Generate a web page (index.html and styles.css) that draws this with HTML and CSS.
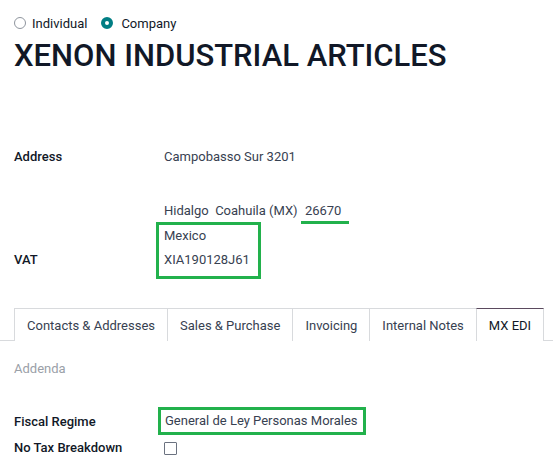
FILE: index.html
```html
<!DOCTYPE html>
<html>
<head>
<meta charset="utf-8">
<link rel="stylesheet" href="styles.css">
</head>
<body>
<div class="page">
  <div class="radios">
    <label class="radio"><span class="dot"></span>Individual</label>
    <label class="radio"><span class="dot on"></span>Company</label>
  </div>
  <h1 class="title">XENON INDUSTRIAL ARTICLES</h1>

  <div class="addr-grid">
    <div class="lbl r1">Address</div>
    <div class="val r1">Campobasso Sur 3201</div>
    <div class="val r2"></div>
    <div class="val r3">Hidalgo&nbsp; Coahuila (MX) <span class="zip">26670</span></div>
    <div class="val r4">Mexico</div>
    <div class="lbl r5">VAT</div>
    <div class="val r5">XIA190128J61</div>
    <div class="hl-box"></div>
  </div>

  <div class="tabs">
    <div class="tab">Contacts &amp; Addresses</div>
    <div class="tab">Sales &amp; Purchase</div>
    <div class="tab">Invoicing</div>
    <div class="tab">Internal Notes</div>
    <div class="tab active">MX EDI</div>
  </div>

  <div class="section-title">Addenda</div>

  <div class="fields">
    <div class="lbl">Fiscal Regime</div>
    <div class="val"><span class="hl">General de Ley Personas Morales</span></div>
    <div class="lbl">No Tax Breakdown</div>
    <div class="val"><span class="check"></span></div>
  </div>
</div>
</body>
</html>
```

FILE: styles.css
```css
html, body {
  margin: 0;
  padding: 0;
  background: #ffffff;
}
body {
  font-family: Roboto, "Liberation Sans", sans-serif;
  font-size: 13px;
  color: #374151;
}
.page {
  padding-top: 14px;
}
.radios {
  display: flex;
  align-items: center;
  height: 18px;
  padding-left: 14px;
}
.radio {
  display: flex;
  align-items: center;
  color: #111827;
  margin-right: 14px;
}
.dot {
  box-sizing: border-box;
  width: 12px;
  height: 12px;
  border-radius: 50%;
  border: 1px solid #8f959e;
  margin-right: 6px;
  display: inline-block;
}
.dot.on {
  border: 4px solid #017e84;
  background: #ffffff;
  margin-right: 8px;
}
.title {
  margin: 3px 0 0 14px;
  font-size: 31px;
  line-height: 42px;
  font-weight: 500;
  color: #111827;
}
.addr-grid {
  position: relative;
  margin-top: 66px;
  display: grid;
  grid-template-columns: 150px 1fr;
  grid-template-rows: 27px 27px 26px 24px 24px;
  padding-left: 14px;
  align-items: center;
}
.lbl {
  font-weight: 500;
  color: #111827;
  grid-column: 1;
}
.val {
  grid-column: 2;
  color: #374151;
}
.r1 { grid-row: 1; }
.r2 { grid-row: 2; }
.r3 { grid-row: 3; }
.r4 { grid-row: 4; }
.r5 { grid-row: 5; }
.zip {
  padding: 0 8px 3px 4px;
  border-bottom: 3px solid #22b14c;
}
.hl-box {
  position: absolute;
  left: 156px;
  top: 79px;
  width: 99px;
  height: 51px;
  border: 3px solid #22b14c;
}
.tabs {
  display: flex;
  margin-top: 37px;
  border-bottom: 1px solid #d8dadd;
  padding-left: 14px;
  height: 32px;
}
.tab {
  box-sizing: border-box;
  height: 33px;
  padding: 0 12px;
  display: flex;
  align-items: center;
  border: 1px solid #d8dadd;
  border-right: none;
  border-bottom: none;
  color: #374151;
  background: #fff;
}
.tab.active {
  border-top: 1px solid #5b4a5e;
  border-right: 1px solid #d8dadd;
  color: #111827;
  margin-bottom: -1px;
}
.section-title {
  padding-left: 14px;
  margin-top: 18px;
  height: 20px;
  line-height: 20px;
  color: #9aa0a8;
}
.fields {
  display: grid;
  grid-template-columns: 150px 1fr;
  grid-template-rows: 28px 25px;
  padding-left: 14px;
  margin-top: 28px;
  align-items: center;
}
.fields .lbl, .fields .val { grid-column: auto; }
.hl {
  display: inline-block;
  margin-left: -6px;
  padding: 2px 5px 2px 4px;
  border: 3px solid #22b14c;
  line-height: 18px;
}
.check {
  display: inline-block;
  box-sizing: border-box;
  width: 13px;
  height: 13px;
  border: 1px solid #6b7280;
  border-radius: 1px;
  vertical-align: middle;
}
```
